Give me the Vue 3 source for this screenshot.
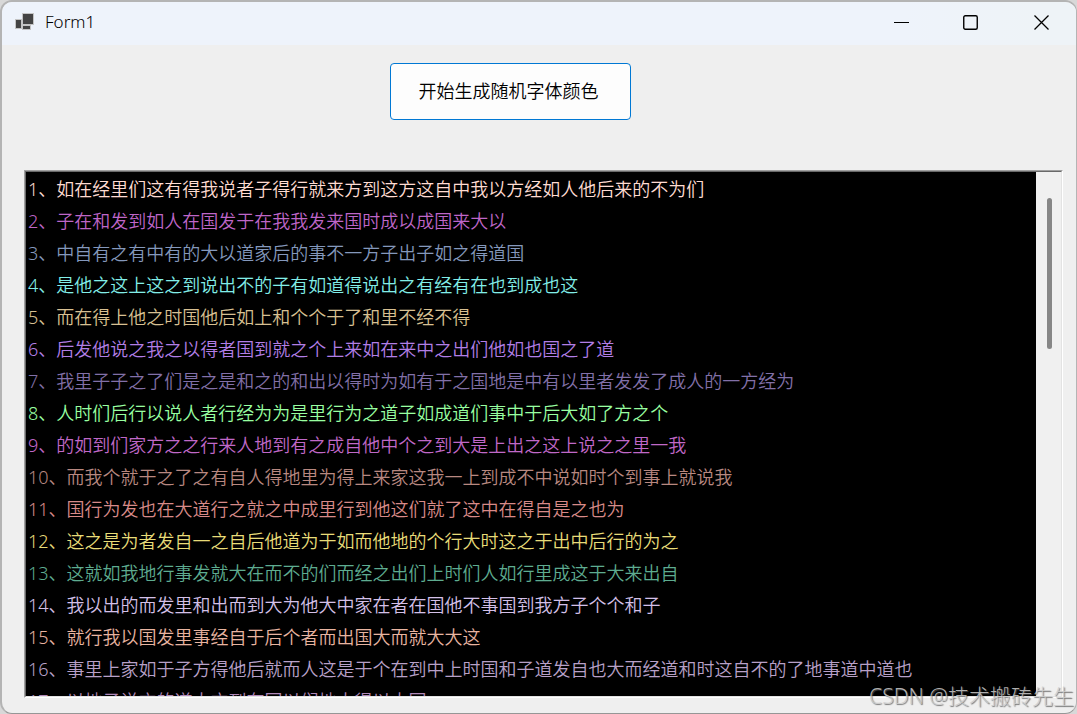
<script setup>
const lines = [
  { color: '#ffdcd2', text: '如在经里们这有得我说者子得行就来方到这方这自中我以方经如人他后来的不为们' },
  { color: '#bf66c8', text: '子在和发到如人在国发于在我我发来国时成以成国来大以' },
  { color: '#8498bc', text: '中自有之有中有的大以道家后的事不一方子出子如之得道国' },
  { color: '#82eee8', text: '是他之这上这之到说出不的子有如道得说出之有经有在也到成也这' },
  { color: '#d8c092', text: '而在得上他之时国他后如上和个个于了和里不经不得' },
  { color: '#b27ee6', text: '后发他说之我之以得者国到就之个上来如在来中之出们他如也国之了道' },
  { color: '#8270a8', text: '我里子子之了们是之是和之的和出以得时为如有于之国地是中有以里者发发了成人的一方经为' },
  { color: '#98ffa0', text: '人时们后行以说人者行经为为是里行为之道子如成道们事中于后大如了方之个' },
  { color: '#c068c8', text: '的如到们家方之之行来人地到有之成自他中个之到大是上出之这上说之之里一我' },
  { color: '#b88880', text: '而我个就于之了之有自人得地里为得上来家这我一上到成不中说如时个到事上就说我' },
  { color: '#d88a88', text: '国行为发也在大道行之就之中成里行到他这们就了这中在得自是之也为' },
  { color: '#e8dc78', text: '这之是为者发自一之自后他道为于如而他地的个行大时这之于出中后行的为之' },
  { color: '#5eac90', text: '这就如我地行事发就大在而不的们而经之出们上时们人如行里成这于大来出自' },
  { color: '#d4c0e8', text: '我以出的而发里和出而到大为他大中家在者在国他不事国到我方子个个和子' },
  { color: '#e8b4a0', text: '就行我以国发里事经自于后个者而出国大而就大大这' },
  { color: '#b8a0c8', text: '事里上家如于子方得他后就而人这是于个在到中上时国和子道发自也大而经道和时这自不的了地事道中道也' },
  { color: '#b088b8', text: '以地子说方的道大方到在国以们地大得以大国' },
]
</script>

<template>
  <div class="desktop">
    <main class="window">
      <header class="titlebar">
        <svg class="app-icon" width="20" height="18" viewBox="0 0 20 18" aria-hidden="true">
          <g fill="#444" stroke="#c4c4c4" stroke-width="1">
            <rect x="0.5" y="6.5" width="6" height="9" />
            <rect x="7.5" y="0.5" width="11" height="11" />
            <rect x="7.5" y="12.5" width="8" height="4" />
          </g>
        </svg>
        <h1 class="title">Form1</h1>
        <div class="controls">
          <button type="button" aria-label="Minimize">
            <svg width="16" height="16" viewBox="0 0 16 16"><path d="M1 8.5H16" stroke="#000" /></svg>
          </button>
          <button type="button" aria-label="Maximize">
            <svg width="16" height="16" viewBox="0 0 16 16"><rect x="0.75" y="1.75" width="13.5" height="13.5" rx="1.5" fill="none" stroke="#000" stroke-width="1.4" /></svg>
          </button>
          <button type="button" aria-label="Close">
            <svg width="16" height="16" viewBox="0 0 16 16"><path d="M1.5 1.5L15.5 15.5M15.5 1.5L1.5 15.5" stroke="#000" stroke-width="1.3" /></svg>
          </button>
        </div>
      </header>

      <div class="toolbar">
        <button type="button" class="generate">开始生成随机字体颜色</button>
      </div>

      <section class="richbox">
        <div class="inner">
          <div class="content">
            <p v-for="(line, i) in lines" :key="i" :style="{ color: line.color }">{{ i + 1 }}、{{ line.text }}</p>
          </div>
          <div class="scrollbar"><div class="thumb"></div></div>
        </div>
      </section>
    </main>
    <div class="watermark">CSDN @技术搬砖先生</div>
  </div>
</template>

<style>
body {
  margin: 0;
  background: #d8d8d8;
}
</style>

<style scoped>
.desktop {
  position: relative;
  height: 100vh;
  overflow: hidden;
  font-family: "Noto Sans", "Noto Sans CJK SC", sans-serif;
}
.window {
  box-sizing: border-box;
  height: 100%;
  display: flex;
  flex-direction: column;
  border: 2px solid #b4b4b4;
  border-right-width: 1px;
  border-bottom: 1px solid #969696;
  border-radius: 12px;
  background: #efefef;
  overflow: hidden;
}
.titlebar {
  flex: none;
  box-sizing: border-box;
  display: flex;
  align-items: center;
  height: 43px;
  padding: 0 0 3px 13px;
  background: linear-gradient(90deg, #eef3fb 84%, #eef3f7 96%);
}
.title {
  flex: 1;
  margin: 0 0 0 10px;
  font-size: 17px;
  line-height: 24px;
  font-weight: 350;
  color: #000;
}
.controls {
  display: flex;
  align-self: stretch;
}
.controls button {
  display: flex;
  align-items: center;
  justify-content: center;
  width: 70px;
  padding: 0;
  border: 0;
  background: none;
}
.toolbar {
  flex: none;
  display: flex;
  justify-content: center;
  padding: 18px 57px 50px 0;
}
.generate {
  width: 241px;
  height: 57px;
  padding: 0 4px 2px 0;
  border: 1px solid #0078d4;
  border-radius: 4px;
  background: #fdfdfd;
  color: #000;
  font: 350 18px/24px "Noto Sans", "Noto Sans CJK SC", sans-serif;
}
.richbox {
  flex: 1;
  min-height: 0;
  display: flex;
  margin: 0 13px 15px 22px;
  border: 1px solid;
  border-color: #a0a0a0 #fff #fff #a0a0a0;
}
.inner {
  flex: 1;
  min-width: 0;
  display: flex;
  border: 1px solid;
  border-color: #696969 #e3e3e3 #e3e3e3 #696969;
}
.content {
  flex: 1;
  min-width: 0;
  padding: 1px 2px;
  background: #000;
  overflow: hidden;
  white-space: nowrap;
}
.content p {
  margin: 0;
  font-size: 18px;
  line-height: 32px;
  font-weight: 350;
}
.scrollbar {
  flex: none;
  width: 25px;
  padding-top: 26px;
  background: #f0f0f0;
}
.thumb {
  width: 5px;
  height: 151px;
  margin-left: 11px;
  border-radius: 3px;
  background: #868686;
}
.watermark {
  position: absolute;
  right: 3px;
  bottom: 3px;
  font-size: 21px;
  line-height: 30px;
  font-weight: 300;
  color: rgba(205, 205, 205, 0.85);
  text-shadow: 1px 1px 1px rgba(90, 90, 90, 0.8);
}
</style>
